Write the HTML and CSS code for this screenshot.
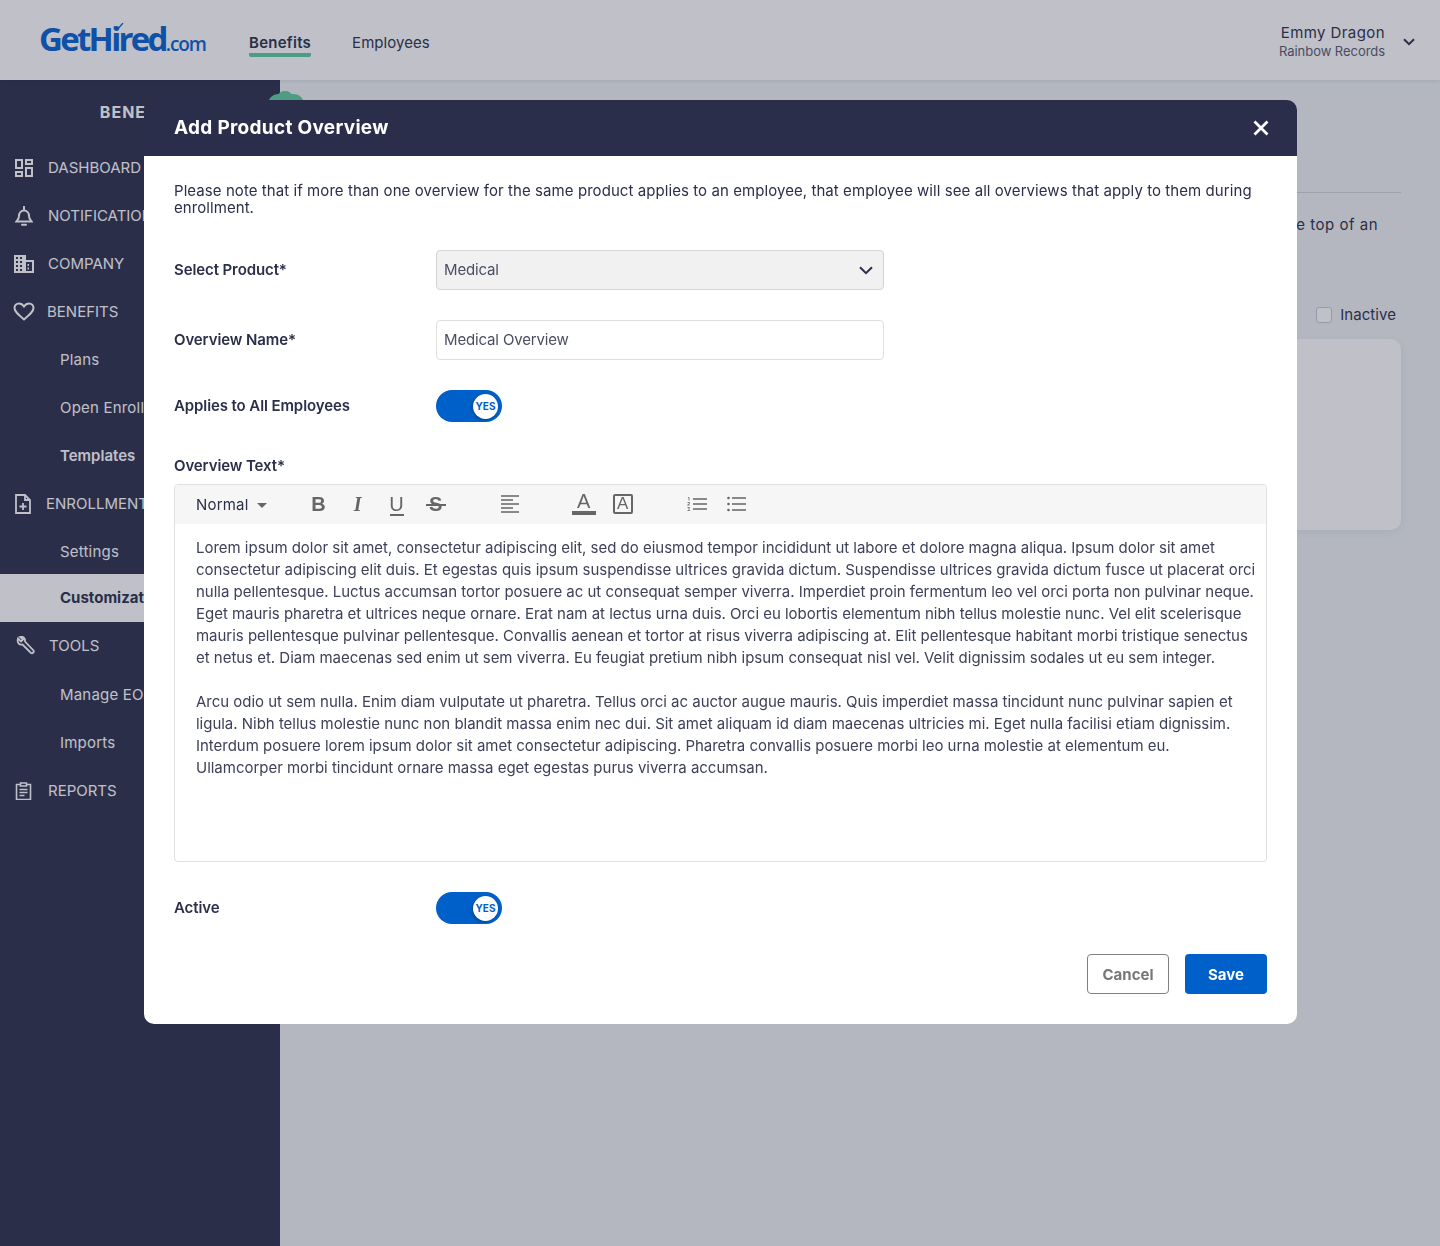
FILE: index.html
```html
<!DOCTYPE html>
<html lang="en">
<head>
<meta charset="utf-8">
<title>Add Product Overview</title>
<link rel="stylesheet" href="styles.css">
</head>
<body>
<div class="app">
  <header class="topbar">
    <div class="logo"><span class="logo-main">GetHired</span><span class="logo-tld">.com</span>
      <svg class="logo-check" viewBox="0 0 11 9" width="11" height="9"><path d="M1 3.500l3 3.500 6-7" fill="none" stroke="#0261d0" stroke-width="1.300"/></svg>
    </div>
    <nav class="topnav">
      <a class="topnav-item is-active">Benefits</a>
      <a class="topnav-item">Employees</a>
    </nav>
    <div class="user">
      <div class="user-text">
        <div class="user-name">Emmy Dragon</div>
        <div class="user-org">Rainbow Records</div>
      </div>
      <svg width="12" height="8" viewBox="0 0 12 8"><path d="M1 1.200l5 5 5-5" fill="none" stroke="#2a2f4a" stroke-width="2"/></svg>
    </div>
  </header>
  <div class="content">
    <aside class="sidebar">
      <span class="side-tab"></span>
      <div class="side-title">BENEFITS</div>
      <a class="side-item">
        <svg class="ico" width="18" height="18" viewBox="0 0 18 18" fill="none" stroke="#fff" stroke-width="2"><rect x="1" y="1" width="6" height="8"/><rect x="11" y="1" width="6" height="4"/><rect x="1" y="13" width="6" height="4"/><rect x="11" y="9" width="6" height="8"/></svg>
        <span>DASHBOARD</span></a>
      <a class="side-item">
        <svg class="ico" width="18" height="20" viewBox="0 0 18 20" fill="none" stroke="#fff" stroke-width="2"><path d="M1.500 15.500c1.500-1.500 2.500-3 2.500-5.500 0-3 2-5.500 5-5.500s5 2.500 5 5.500c0 2.500 1 4 2.500 5.500z"/><path d="M9 .8v3M7 18.800h4" stroke-linecap="round"/></svg>
        <span>NOTIFICATIONS</span></a>
      <a class="side-item side-item-company">
        <svg class="ico" width="20" height="18" viewBox="0 0 20 18"><path fill="#fff" fill-rule="evenodd" d="M0 0h12v5h8v13H0zM2 2v2h2V2zm4 0v2h2V2zM2 6v2h2V6zm4 0v2h2V6zm-4 4v2h2v-2zm4 0v2h2v-2zm-4 4v2h2v-2zm4 0v2h2v-2zm6-7v9h6V7zm1.500 2v2h1.500V9zm0 3.500v2h1.500v-2z"/></svg>
        <span>COMPANY</span></a>
      <a class="side-item side-item-tight">
        <svg class="ico" width="22" height="19" viewBox="0 0 22 19" fill="none" stroke="#fff" stroke-width="2"><path d="M11 17.500C5 12.500 1.500 9.500 1.500 6c0-2.700 2-4.500 4.500-4.500 2 0 3.700 1 5 3 1.300-2 3-3 5-3 2.500 0 4.500 1.800 4.500 4.500 0 3.500-3.500 6.500-9.500 11.500z"/></svg>
        <span>BENEFITS</span></a>
      <a class="side-sub">Plans</a>
      <a class="side-sub">Open Enrollment</a>
      <a class="side-sub is-strong">Templates</a>
      <a class="side-item side-item-enroll">
        <svg class="ico" width="16" height="20" viewBox="0 0 16 20" fill="none" stroke="#fff" stroke-width="1.800"><path d="M1 1h9l5 5v13H1z"/><path d="M10 1v5h5M8 9v7M4.500 12.500h7"/></svg>
        <span>ENROLLMENT</span></a>
      <a class="side-sub">Settings</a>
      <a class="side-sub is-current">Customization</a>
      <a class="side-item side-item-tools">
        <svg class="ico" width="19" height="19" viewBox="0 0 19 19" fill="none" stroke="#fff" stroke-width="1.800"><path d="M2 2.500L5 5.500 7 3.500 4 1c3-.8 5.500 1.200 5 4.500l8.500 9c1 1.500-1 3.500-2.500 2.500L6.500 8.500C3 9.500.8 6 2 2.500z"/></svg>
        <span>TOOLS</span></a>
      <a class="side-sub side-sub-shift">Manage EOI</a>
      <a class="side-sub">Imports</a>
      <a class="side-item side-item-reports">
        <svg class="ico" width="17" height="18" viewBox="0 0 17 18" fill="none" stroke="#fff" stroke-width="1.600"><path d="M5 2.500H1.500v15h14v-15H12"/><path d="M5.500 1h6v3h-6zM4.500 7.500h8M4.500 10.500h8M4.500 13.500h5"/></svg>
        <span>REPORTS</span></a>
    </aside>
    <main class="main">
      <div class="main-rule"></div>
      <p class="main-note">Overviews for each product are displayed at the top of an</p>
      <label class="main-filter"><span class="main-check"></span>Inactive</label>
      <div class="main-card"></div>
    </main>
  </div>
</div>
<div class="overlay"></div>
<section class="modal">
  <div class="modal-head">
    <h2 class="modal-title">Add Product Overview</h2>
    <svg width="16" height="16" viewBox="0 0 16 16"><path d="M1.500 1.500l13 13m0-13l-13 13" stroke="#fff" stroke-width="2.800" fill="none"/></svg>
  </div>
  <div class="modal-body">
    <p class="modal-note">Please note that if more than one overview for the same product applies to an employee, that employee will see all overviews that apply to them during<br>enrollment.</p>
    <div class="row row-product">
      <label class="row-label">Select Product*</label>
      <div class="field field-select"><span>Medical</span>
        <svg width="14" height="9" viewBox="0 0 14 9"><path d="M1 1.200l6 6 6-6" fill="none" stroke="#2a2f4a" stroke-width="2"/></svg>
      </div>
    </div>
    <div class="row row-name">
      <label class="row-label">Overview Name*</label>
      <div class="field"><span>Medical Overview</span></div>
    </div>
    <div class="row row-all">
      <label class="row-label">Applies to All Employees</label>
      <div class="toggle"><span class="toggle-thumb">YES</span></div>
    </div>
    <label class="row-label text-label">Overview Text*</label>
    <div class="editor">
      <div class="toolbar">
        <span class="tb-style">Normal</span><span class="tb-caret"></span>
        <span class="tb-glyph tb-b">B</span>
        <span class="tb-glyph tb-i">I</span>
        <span class="tb-glyph tb-u">U</span>
        <span class="tb-glyph tb-s">S</span>
        <svg class="tb-align" width="18" height="18" viewBox="0 0 18 18" stroke="#666" stroke-width="1.600"><path d="M0 1h18M0 5h12M0 9h18M0 13h12M0 17h18"/></svg>
        <span class="tb-color">A</span>
        <span class="tb-box">A</span>
        <svg class="tb-ol" width="20" height="16" viewBox="0 0 20 16"><path d="M6 3h14M6 8h14M6 13h14" stroke="#666" stroke-width="1.600"/><path d="M1 1.500h1v3M.5 6.500h2v1.200l-2 1.300h2.200M.5 11.500h2.200l-1 1.500 1 1.500H.5" fill="none" stroke="#666" stroke-width=".8"/></svg>
        <svg class="tb-ul" width="19" height="16" viewBox="0 0 19 16"><path d="M5 2h14M5 8h14M5 14h14" stroke="#666" stroke-width="1.600"/><circle cx="1.500" cy="2" r="1.300" fill="#666"/><circle cx="1.500" cy="8" r="1.300" fill="#666"/><circle cx="1.500" cy="14" r="1.300" fill="#666"/></svg>
      </div>
      <div class="editor-text">
        <p>Lorem ipsum dolor sit amet, consectetur adipiscing elit, sed do eiusmod tempor incididunt ut labore et dolore magna aliqua. Ipsum dolor sit amet<br>consectetur adipiscing elit duis. Et egestas quis ipsum suspendisse ultrices gravida dictum. Suspendisse ultrices gravida dictum fusce ut placerat orci<br>nulla pellentesque. Luctus accumsan tortor posuere ac ut consequat semper viverra. Imperdiet proin fermentum leo vel orci porta non pulvinar neque.<br>Eget mauris pharetra et ultrices neque ornare. Erat nam at lectus urna duis. Orci eu lobortis elementum nibh tellus molestie nunc. Vel elit scelerisque<br>mauris pellentesque pulvinar pellentesque. Convallis aenean et tortor at risus viverra adipiscing at. Elit pellentesque habitant morbi tristique senectus<br>et netus et. Diam maecenas sed enim ut sem viverra. Eu feugiat pretium nibh ipsum consequat nisl vel. Velit dignissim sodales ut eu sem integer.</p>
        <p>Arcu odio ut sem nulla. Enim diam vulputate ut pharetra. Tellus orci ac auctor augue mauris. Quis imperdiet massa tincidunt nunc pulvinar sapien et<br>ligula. Nibh tellus molestie nunc non blandit massa enim nec dui. Sit amet aliquam id diam maecenas ultricies mi. Eget nulla facilisi etiam dignissim.<br>Interdum posuere lorem ipsum dolor sit amet consectetur adipiscing. Pharetra convallis posuere morbi leo urna molestie at elementum eu.<br>Ullamcorper morbi tincidunt ornare massa eget egestas purus viverra accumsan.</p>
      </div>
    </div>
    <div class="row row-active">
      <label class="row-label">Active</label>
      <div class="toggle"><span class="toggle-thumb">YES</span></div>
    </div>
    <div class="actions">
      <button class="btn btn-cancel">Cancel</button>
      <button class="btn btn-save">Save</button>
    </div>
  </div>
</section>
</body>
</html>
```
FILE: styles.css
```css
* { box-sizing: border-box; }
html, body { margin: 0; height: 100%; }
body {
  font-family: Inter, "Noto Sans", sans-serif;
  color: #2a2f4a;
  background: #eff3f4;
  font-size: 14px;
}
.app { width: 1440px; height: 1246px; display: flex; flex-direction: column; overflow: hidden; }

.topbar { height: 80px; flex: none; background: #fff; display: flex; align-items: center; padding: 0 25px 0 39px; position: relative; z-index: 1; box-shadow: 0 1px 4px rgba(42,47,74,.12); }
.logo { position: relative; width: 210px; display: flex; align-items: baseline; color: #0261d0; font-family: "Open Sans", sans-serif; margin-top: -2px; }
.logo-main { font-size: 33px; font-weight: 700; letter-spacing: -2.7px; line-height: 38px; }
.logo-tld { font-size: 19px; font-weight: 600; letter-spacing: -1.1px; margin-left: 0; }
.logo-check { position: absolute; left: 74px; top: 3px; }
.topnav { display: flex; gap: 41px; }
.topnav-item { font-size: 15px; letter-spacing: .05px; line-height: 20px; padding: 0; border-bottom: 4px solid transparent; margin-top: 10px; border-radius: 2px; }
.topnav-item.is-active { font-weight: 600; letter-spacing: .25px; border-bottom-color: #5ccc9e; }
.user { margin-left: auto; display: flex; align-items: center; gap: 18px; margin-top: 4px; }
.user-text { text-align: right; }
.user-name { font-size: 15px; line-height: 18px; letter-spacing: .42px; }
.user-org { font-size: 13px; line-height: 18px; letter-spacing: -.05px; opacity: .8; }

.content { flex: 1; display: flex; min-height: 0; }
.sidebar { width: 280px; flex: none; background: #2a2e4a; color: #fff; position: relative; }
.side-tab { position: absolute; left: 268px; top: 14px; width: 36px; height: 22px; border-radius: 10px; background: #5ccc9e; }
.side-tab::before { content: ""; position: absolute; left: 10px; top: -3px; width: 14px; height: 10px; border-radius: 50%; background: #5ccc9e; }
.side-title { height: 64px; padding-left: 5px; text-align: center; font-size: 16px; font-weight: 700; line-height: 64px; letter-spacing: 1px; }
.side-item { height: 48px; display: flex; align-items: center; padding: 0 0 1px 15px; white-space: nowrap; font-size: 15px; letter-spacing: 0; }
.side-item .ico { flex: none; margin-right: 15px; }
.side-item span { display: block; }
.side-item-company { padding-left: 14px; }
.side-item-company .ico { margin-right: 14px; }
.side-item-tight { padding-left: 13px; }
.side-item-tight .ico { margin-right: 12px; }
.side-item-tools { padding-left: 16px; }
.side-item-tools .ico { margin-right: 14px; }
.side-item-reports .ico { margin-right: 16px; }
.side-sub { height: 48px; display: flex; align-items: center; padding: 0 0 1px 60px; white-space: nowrap; font-size: 15px; letter-spacing: .2px; }
.side-sub.is-strong { font-weight: 600; letter-spacing: 0; }
.side-sub.is-current { background: #fff; color: #2a2f4a; font-weight: 700; margin-top: -2px; letter-spacing: 0; }
.side-sub-shift { margin-top: 1px; }

.main { flex: 1; padding: 112px 39px 0 0; display: flex; flex-direction: column; align-items: flex-end; }
.main-rule { width: 100%; height: 1px; background: #cfd3da; }
.main-note { margin: 22px 23px 0 0; line-height: 20px; font-size: 15px; letter-spacing: .5px; white-space: nowrap; }
.main-filter { margin-top: 70px; display: flex; align-items: center; font-size: 15px; letter-spacing: .05px; margin-right: 5px; line-height: 20px; }
.main-check { width: 16px; height: 16px; border: 1px solid #c4c7d0; border-radius: 3px; background: #fff; margin-right: 8px; }
.main-card { margin-top: 14px; width: 400px; height: 191px; background: #fff; border-radius: 10px; box-shadow: 0 2px 10px rgba(42,47,74,.08); }

.overlay { position: fixed; inset: 0; background: rgba(42,47,74,.3); z-index: 2; }

.modal { position: absolute; left: 144px; top: 100px; width: 1153px; z-index: 3; }
.modal-head { height: 56px; background: #2a2e4a; border-radius: 10px 10px 0 0; display: flex; align-items: center; justify-content: space-between; padding: 0 28px 0 30px; }
.modal-title { margin: 0; color: #fff; font-size: 19px; font-weight: 700; letter-spacing: .3px; line-height: 56px; }
.modal-body { background: #fff; border-radius: 0 0 10px 10px; padding: 26px 30px 30px; }
.modal-note { margin: 0; font-size: 15px; line-height: 17px; letter-spacing: .07px; white-space: nowrap; }
.row { display: flex; align-items: center; }
.row-label { display: block; width: 262px; flex: none; font-size: 15px; font-weight: 600; letter-spacing: -.1px; line-height: 20px; }
.row-product { margin-top: 34px; }
.row-name { margin-top: 30px; }
.row-all { margin-top: 30px; }
.text-label { margin-top: 34px; width: auto; }
.row-active { margin-top: 30px; }
.field { width: 448px; height: 40px; border: 1px solid #e0e0e0; border-radius: 4px; display: flex; align-items: center; justify-content: space-between; padding: 0 10px 1px 7px; font-size: 15px; letter-spacing: -.15px; color: #4a4e63; }
.field svg { margin-top: 1px; }
.field-select { background: #f1f1f1; border-color: #d4d4d4; }
.toggle { width: 66px; height: 32px; border-radius: 16px; background: #0060c9; position: relative; display: flex; align-items: center; justify-content: flex-end; padding-right: 4px; }
.toggle-thumb { width: 25px; height: 25px; border-radius: 50%; background: #fff; color: #0060c9; font-size: 10px; font-weight: 700; display: flex; align-items: center; justify-content: center; box-shadow: -1px 1px 3px rgba(0,0,0,.3); }
.editor { margin-top: 8px; height: 378px; border: 1px solid #e0e0e0; border-radius: 4px; overflow: hidden; }
.toolbar { height: 39px; background: #f6f6f6; display: flex; align-items: center; padding: 0 0 1px 21px; color: #666; }
.tb-style { font-size: 15px; letter-spacing: .2px; color: #2a2f4a; }
.tb-caret { width: 0; height: 0; border: 5px solid transparent; border-top: 5px solid #666; border-bottom: 0; margin-left: 8px; margin-right: 40px; margin-top: 2px; }
.tb-glyph { position: relative; width: 24px; margin-right: 15px; text-align: center; font-family: "Liberation Sans", sans-serif; font-size: 20px; line-height: 24px; color: #666; }
.tb-b { font-weight: 700; }
.tb-i { font-family: "Liberation Serif", serif; font-weight: 700; font-style: italic; }
.tb-u::after { content: ""; position: absolute; left: 5px; width: 14px; height: 2px; bottom: 0; background: #666; }
.tb-s { font-weight: 700; margin-right: 0; }
.tb-s::after { content: ""; position: absolute; left: 2px; width: 20px; height: 2px; top: 12px; background: #666; }
.tb-align { margin-left: 53px; flex: none; }
.tb-color { margin-left: 53px; width: 24px; height: 24px; border-bottom: 4px solid #666; text-align: center; font-size: 20px; line-height: 20px; font-family: "Liberation Sans", sans-serif; margin-top: -2px; }
.tb-box { margin-left: 17px; width: 20px; height: 20px; border: 2px solid #666; border-radius: 2px; text-align: center; font-size: 17px; line-height: 16px; font-family: "Liberation Sans", sans-serif; }
.tb-ol { margin-left: 54px; flex: none; }
.tb-ul { margin-left: 20px; flex: none; }
.editor-text { padding: 13px 21px 0; font-size: 15px; line-height: 22px; letter-spacing: -.02px; color: #3d4159; white-space: nowrap; }
.editor-text p { margin: 0 0 22px; }
.actions { margin-top: 30px; display: flex; justify-content: flex-end; gap: 16px; }
.btn { width: 82px; height: 40px; border-radius: 4px; font-family: inherit; font-size: 15px; font-weight: 700; letter-spacing: 0; padding: 0; }
.btn-cancel { background: #fff; color: #777; border: 1px solid #808080; }
.btn-save { background: #0060c9; color: #fff; border: 0; }
```
